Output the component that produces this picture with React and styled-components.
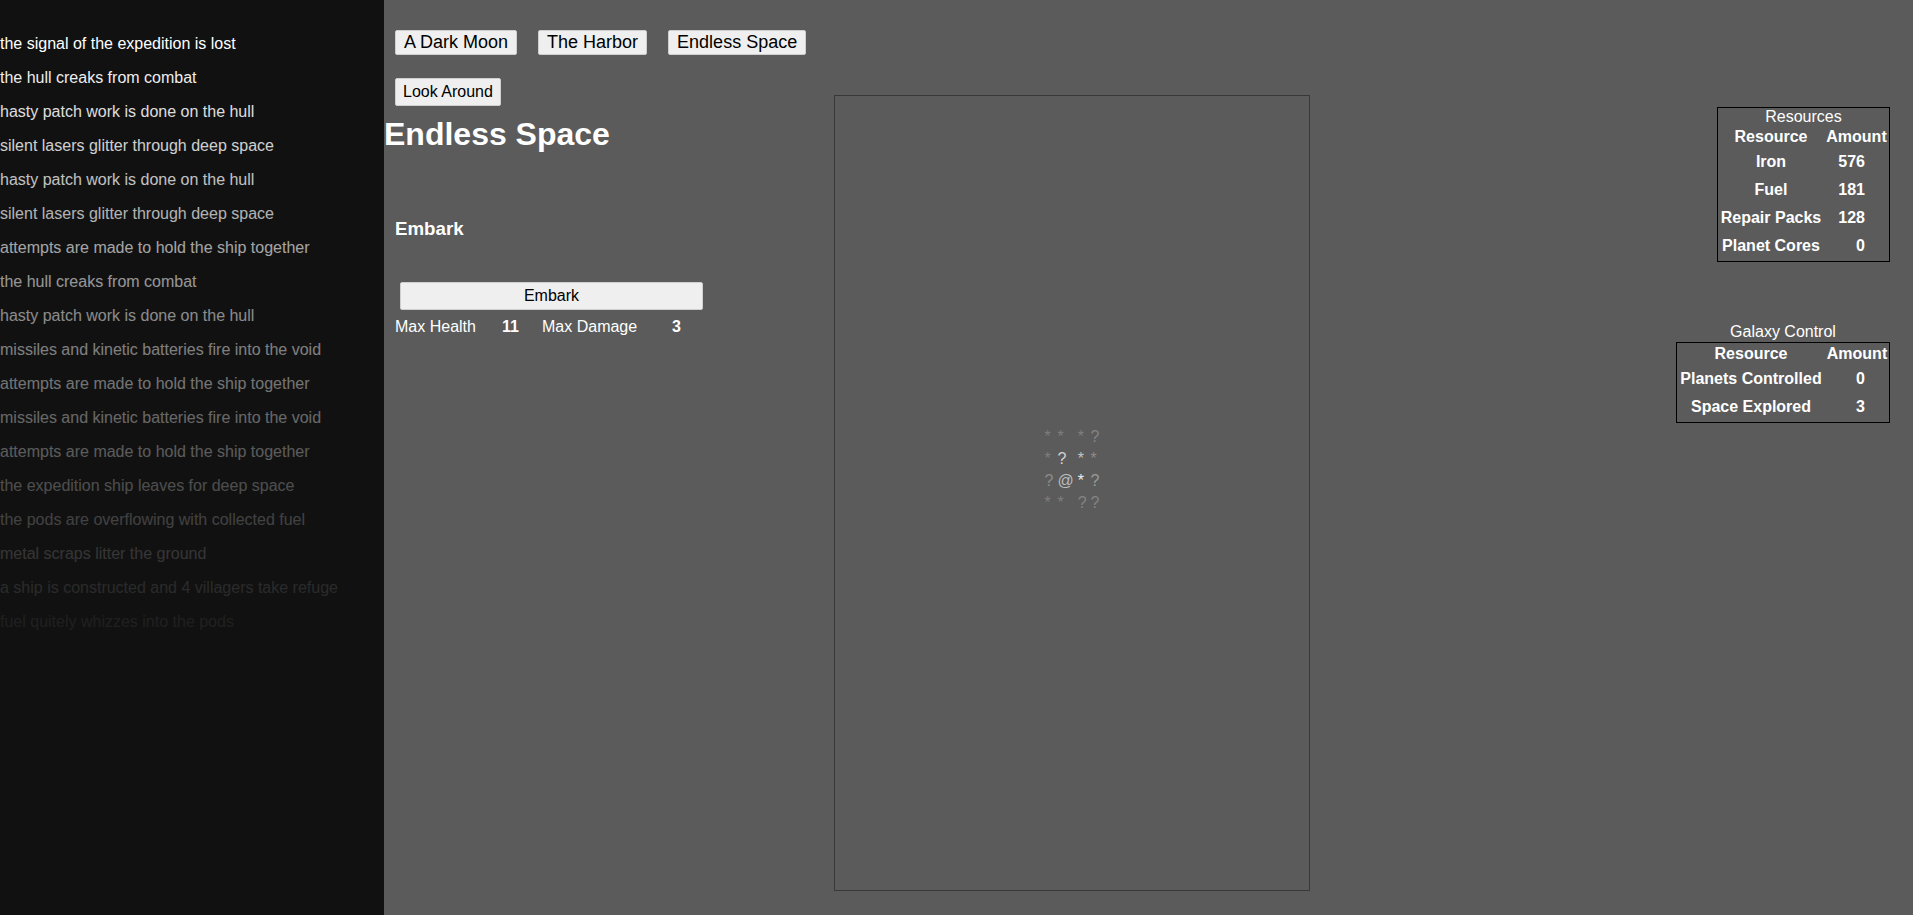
import React from "react";
import styled, { createGlobalStyle } from "styled-components";

const GlobalStyle = createGlobalStyle`
    html, body {
        margin : 0;
        padding : 0;
        background : #5b5b5b;
        font-family : "Liberation Sans", Arial, sans-serif;
        overflow : hidden;
    }
`;

const Page = styled.div`
    display : flex;
    height : 100vh;
    color : #fff;
`;

const LogPanel = styled.aside`
    width : 384px;
    flex : 0 0 384px;
    background : #111;
    padding-top : 35px;
    display : flex;
    flex-direction : column;
    gap : 16px;
    box-sizing : border-box;
`;

const LogLine = styled.div`
    font-size : 16px;
    line-height : 18px;
    white-space : nowrap;
    color : #fff;
`;

const Main = styled.main`
    flex : 1;
    display : flex;
    flex-direction : column;
    padding-top : 30px;
`;

const Tabs = styled.div`
    display : flex;
    gap : 21px;
    padding-left : 11px;
`;

const Button = styled.button`
    font-family : "Liberation Sans", Arial, sans-serif;
    background : #efefef;
    color : #000;
    border : 1px solid #cfcfcf;
    border-radius : 2px;
    box-sizing : border-box;
    cursor : pointer;
    padding : 0 ${props => props.$px || 7}px;
    font-size : ${props => props.$size || 16}px;
    height : ${props => props.$h || 28}px;
`;

const Body = styled.div`
    display : flex;
    margin-top : 23px;
`;

const LeftPanel = styled.section`
    width : 450px;
    flex : 0 0 450px;
    display : flex;
    flex-direction : column;
    align-items : flex-start;
`;

const LookAround = styled(Button)`
    margin-left : 11px;
`;

const Title = styled.h1`
    font-size : 32px;
    font-weight : bold;
    margin : 10px 0 0 0;
    line-height : 37px;
`;

const SubTitle = styled.h3`
    font-size : 18.72px;
    font-weight : bold;
    margin : 65px 0 0 11px;
    line-height : 22px;
`;

const EmbarkButton = styled(Button)`
    margin : 42px 0 0 16px;
    width : 303px;
`;

const Stats = styled.div`
    display : flex;
    margin : 8px 0 0 11px;
    font-size : 16px;
    line-height : 18px;
`;

const StatCell = styled.div`
    width : ${props => props.$w}px;
    font-weight : ${props => props.$bold ? "bold" : "normal"};
`;

const MapBox = styled.div`
    width : 476px;
    height : 796px;
    box-sizing : border-box;
    margin-top : 17px;
    border : 1px solid #383838;
    display : flex;
    align-items : center;
    justify-content : center;
    padding-bottom : 46px;
`;

const MapTable = styled.table`
    font-size : 16px;
    border-spacing : 2px;
    td {
        padding : 1px;
        line-height : 18px;
    }
`;

const MapCell = styled.td`
    color : ${props => props.$c};
`;

const SidePanel = styled.section`
    flex : 1;
    display : flex;
    flex-direction : column;
    align-items : flex-end;
    padding-right : 23px;
`;

const StatBox = styled.div`
    width : ${props => props.$w}px;
    box-sizing : border-box;
    border : 1px solid #000;
    padding-bottom : 1px;
    margin-top : ${props => props.$mt || 0}px;
    font-size : 16px;
`;

const BoxCaption = styled.div`
    text-align : center;
    line-height : 18px;
`;

const OuterCaption = styled.div`
    margin-top : 61px;
    text-align : center;
    font-size : 16px;
    line-height : 18px;
    width : 214px;
    margin-bottom : 1px;
`;

const Grid = styled.div`
    display : grid;
    grid-template-columns : ${props => props.$col}px 1fr;
    grid-auto-rows : 28px;
    grid-template-rows : 22px;
    font-weight : bold;
    align-items : center;
`;

const HeadCell = styled.div`
    text-align : center;
    white-space : nowrap;
`;

const ValueCell = styled.div`
    text-align : right;
    padding-right : 24px;
`;

const logs = [
    "the signal of the expedition is lost",
    "the hull creaks from combat",
    "hasty patch work is done on the hull",
    "silent lasers glitter through deep space",
    "hasty patch work is done on the hull",
    "silent lasers glitter through deep space",
    "attempts are made to hold the ship together",
    "the hull creaks from combat",
    "hasty patch work is done on the hull",
    "missiles and kinetic batteries fire into the void",
    "attempts are made to hold the ship together",
    "missiles and kinetic batteries fire into the void",
    "attempts are made to hold the ship together",
    "the expedition ship leaves for deep space",
    "the pods are overflowing with collected fuel",
    "metal scraps litter the ground",
    "a ship is constructed and 4 villagers take refuge",
    "fuel quitely whizzes into the pods",
];

const fades = [1, 0.93, 0.86, 0.8, 0.74, 0.68, 0.62, 0.56, 0.51, 0.46, 0.41, 0.36, 0.31, 0.25, 0.2, 0.15, 0.1, 0.06];

const dim = "#7e7e7e";
const mapRows = [
    [["*", dim], ["*", dim], ["*", dim], ["?", "#848484"]],
    [["*", dim], ["?", "#d2d2d2"], ["*", "#c4c4c4"], ["*", "#8a8a8a"]],
    [["?", "#8c8c8c"], ["@", "#bdbdbd"], ["*", "#eeeeee"], ["?", "#9a9a9a"]],
    [["*", dim], ["*", dim], ["?", "#848484"], ["?", "#848484"]],
];

const resources = [["Iron", 576], ["Fuel", 181], ["Repair Packs", 128], ["Planet Cores", 0]];
const galaxy = [["Planets Controlled", 0], ["Space Explored", 3]];

const App = () => {
    return (
        <Page>
            <GlobalStyle />
            <LogPanel>
                {logs.map((line, i) =>
                    <LogLine key={i} style={{ opacity: fades[i] }}>{line}</LogLine>
                )}
            </LogPanel>
            <Main>
                <Tabs>
                    <Button $size={18} $h={25} $px={8}>A Dark Moon</Button>
                    <Button $size={18} $h={25} $px={8}>The Harbor</Button>
                    <Button $size={18} $h={25} $px={8}>Endless Space</Button>
                </Tabs>
                <Body>
                    <LeftPanel>
                        <LookAround>Look Around</LookAround>
                        <Title>Endless Space</Title>
                        <SubTitle>Embark</SubTitle>
                        <EmbarkButton>Embark</EmbarkButton>
                        <Stats>
                            <StatCell $w={107}>Max Health</StatCell>
                            <StatCell $w={40} $bold>11</StatCell>
                            <StatCell $w={130}>Max Damage</StatCell>
                            <StatCell $w={20} $bold>3</StatCell>
                        </Stats>
                    </LeftPanel>
                    <MapBox>
                        <MapTable>
                            <tbody>
                                {mapRows.map((row, r) =>
                                    <tr key={r}>
                                        {row.map(([ch, c], k) => <MapCell key={k} $c={c}>{ch}</MapCell>)}
                                    </tr>
                                )}
                            </tbody>
                        </MapTable>
                    </MapBox>
                    <SidePanel>
                        <StatBox $w={173} $mt={29}>
                            <BoxCaption>Resources</BoxCaption>
                            <Grid $col={106}>
                                <HeadCell>Resource</HeadCell>
                                <HeadCell>Amount</HeadCell>
                                {resources.map(([name, amount]) =>
                                    <React.Fragment key={name}>
                                        <HeadCell>{name}</HeadCell>
                                        <ValueCell>{amount}</ValueCell>
                                    </React.Fragment>
                                )}
                            </Grid>
                        </StatBox>
                        <OuterCaption>Galaxy Control</OuterCaption>
                        <StatBox $w={214}>
                            <Grid $col={148}>
                                <HeadCell>Resource</HeadCell>
                                <HeadCell>Amount</HeadCell>
                                {galaxy.map(([name, amount]) =>
                                    <React.Fragment key={name}>
                                        <HeadCell>{name}</HeadCell>
                                        <ValueCell>{amount}</ValueCell>
                                    </React.Fragment>
                                )}
                            </Grid>
                        </StatBox>
                    </SidePanel>
                </Body>
            </Main>
        </Page>
    );
};

export default App;
